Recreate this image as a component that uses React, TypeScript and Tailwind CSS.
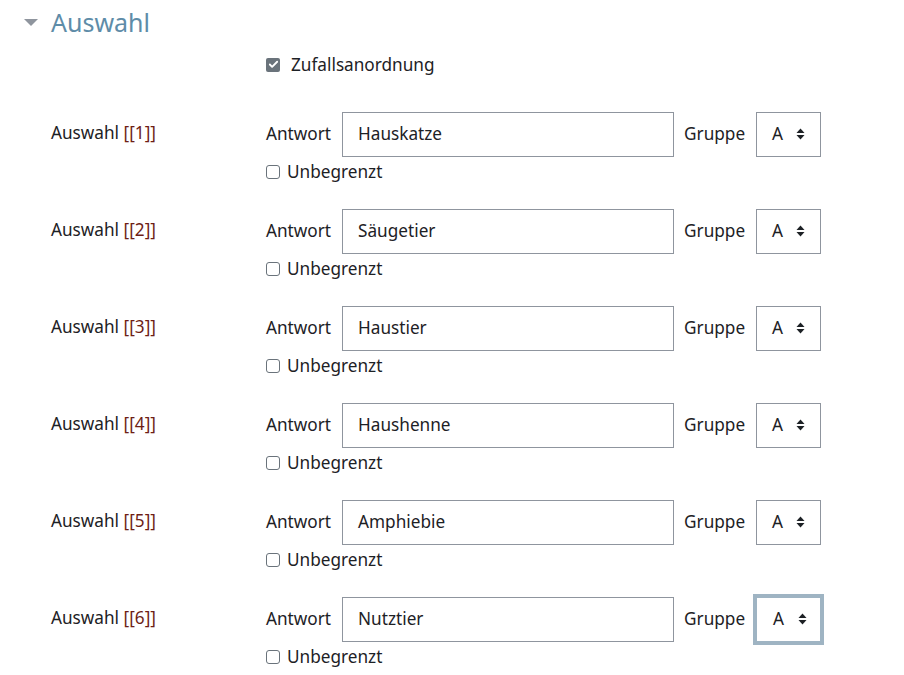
import { Check } from "lucide-react";

const choices = [
  { id: 1, answer: "Hauskatze" },
  { id: 2, answer: "Säugetier" },
  { id: 3, answer: "Haustier" },
  { id: 4, answer: "Haushenne" },
  { id: 5, answer: "Amphiebie" },
  { id: 6, answer: "Nutztier" },
];

const SortArrows = () => (
  <svg width="9" height="12" viewBox="0 0 9 12" className="ml-auto">
    <path d="M4.5 0.5 L8.5 5 L0.5 5 Z" fill="#1d2125" />
    <path d="M4.5 11.5 L8.5 7 L0.5 7 Z" fill="#1d2125" />
  </svg>
);

export default function App() {
  return (
    <div
      className="min-h-screen bg-white text-[#1d2125] text-[17.2px]"
      style={{ fontFamily: "'Noto Sans', 'Open Sans', sans-serif" }}
    >
      <div className="flex items-center pt-[6px] pl-[24px]">
        <svg width="14" height="8" viewBox="0 0 14 8" className="mt-[2px]">
          <path d="M0 0 L14 0 L7 7 Z" fill="#8f959e" />
        </svg>
        <h2 className="ml-[13px] text-[25px] leading-[32px] text-[#5e8ca8]">Auswahl</h2>
      </div>

      <div className="flex items-center pl-[266px] mt-[14px]">
        <span className="flex h-[14px] w-[14px] items-center justify-center rounded-[2px] bg-[#6a737b]">
          <Check className="h-[11px] w-[11px] text-white" strokeWidth={4} />
        </span>
        <span className="ml-[11px]">Zufallsanordnung</span>
      </div>

      <div className="mt-[34px] flex flex-col gap-[25px]">
        {choices.map((c) => (
          <div key={c.id} className="flex">
            <div className="w-[266px] pl-[51px] pt-[8px]">
              Auswahl <span className="text-[#6e1e16]">[[{c.id}]]</span>
            </div>
            <div className="flex flex-col">
              <div className="flex items-center">
                <span>Antwort</span>
                <div className="ml-[11px] flex h-[45px] w-[332px] items-center border border-[#8f959e] px-[15px]">
                  {c.answer}
                </div>
                <span className="ml-[10px]">Gruppe</span>
                {c.id === 6 ? (
                  <div className="-my-[3px] ml-[8px] flex h-[51px] w-[71px] items-center border-[4px] border-[#9fb4c3] pl-[16px] pr-[13px]">
                    A
                    <SortArrows />
                  </div>
                ) : (
                  <div className="ml-[11px] flex h-[45px] w-[65px] items-center border border-[#8f959e] pl-[15px] pr-[15px]">
                    A
                    <SortArrows />
                  </div>
                )}
              </div>
              <div className="mt-[3px] flex h-[24px] items-center">
                <span className="h-[14px] w-[14px] rounded-[3px] border border-[#6a737b] bg-white" />
                <span className="ml-[7px]">Unbegrenzt</span>
              </div>
            </div>
          </div>
        ))}
      </div>
    </div>
  );
}
